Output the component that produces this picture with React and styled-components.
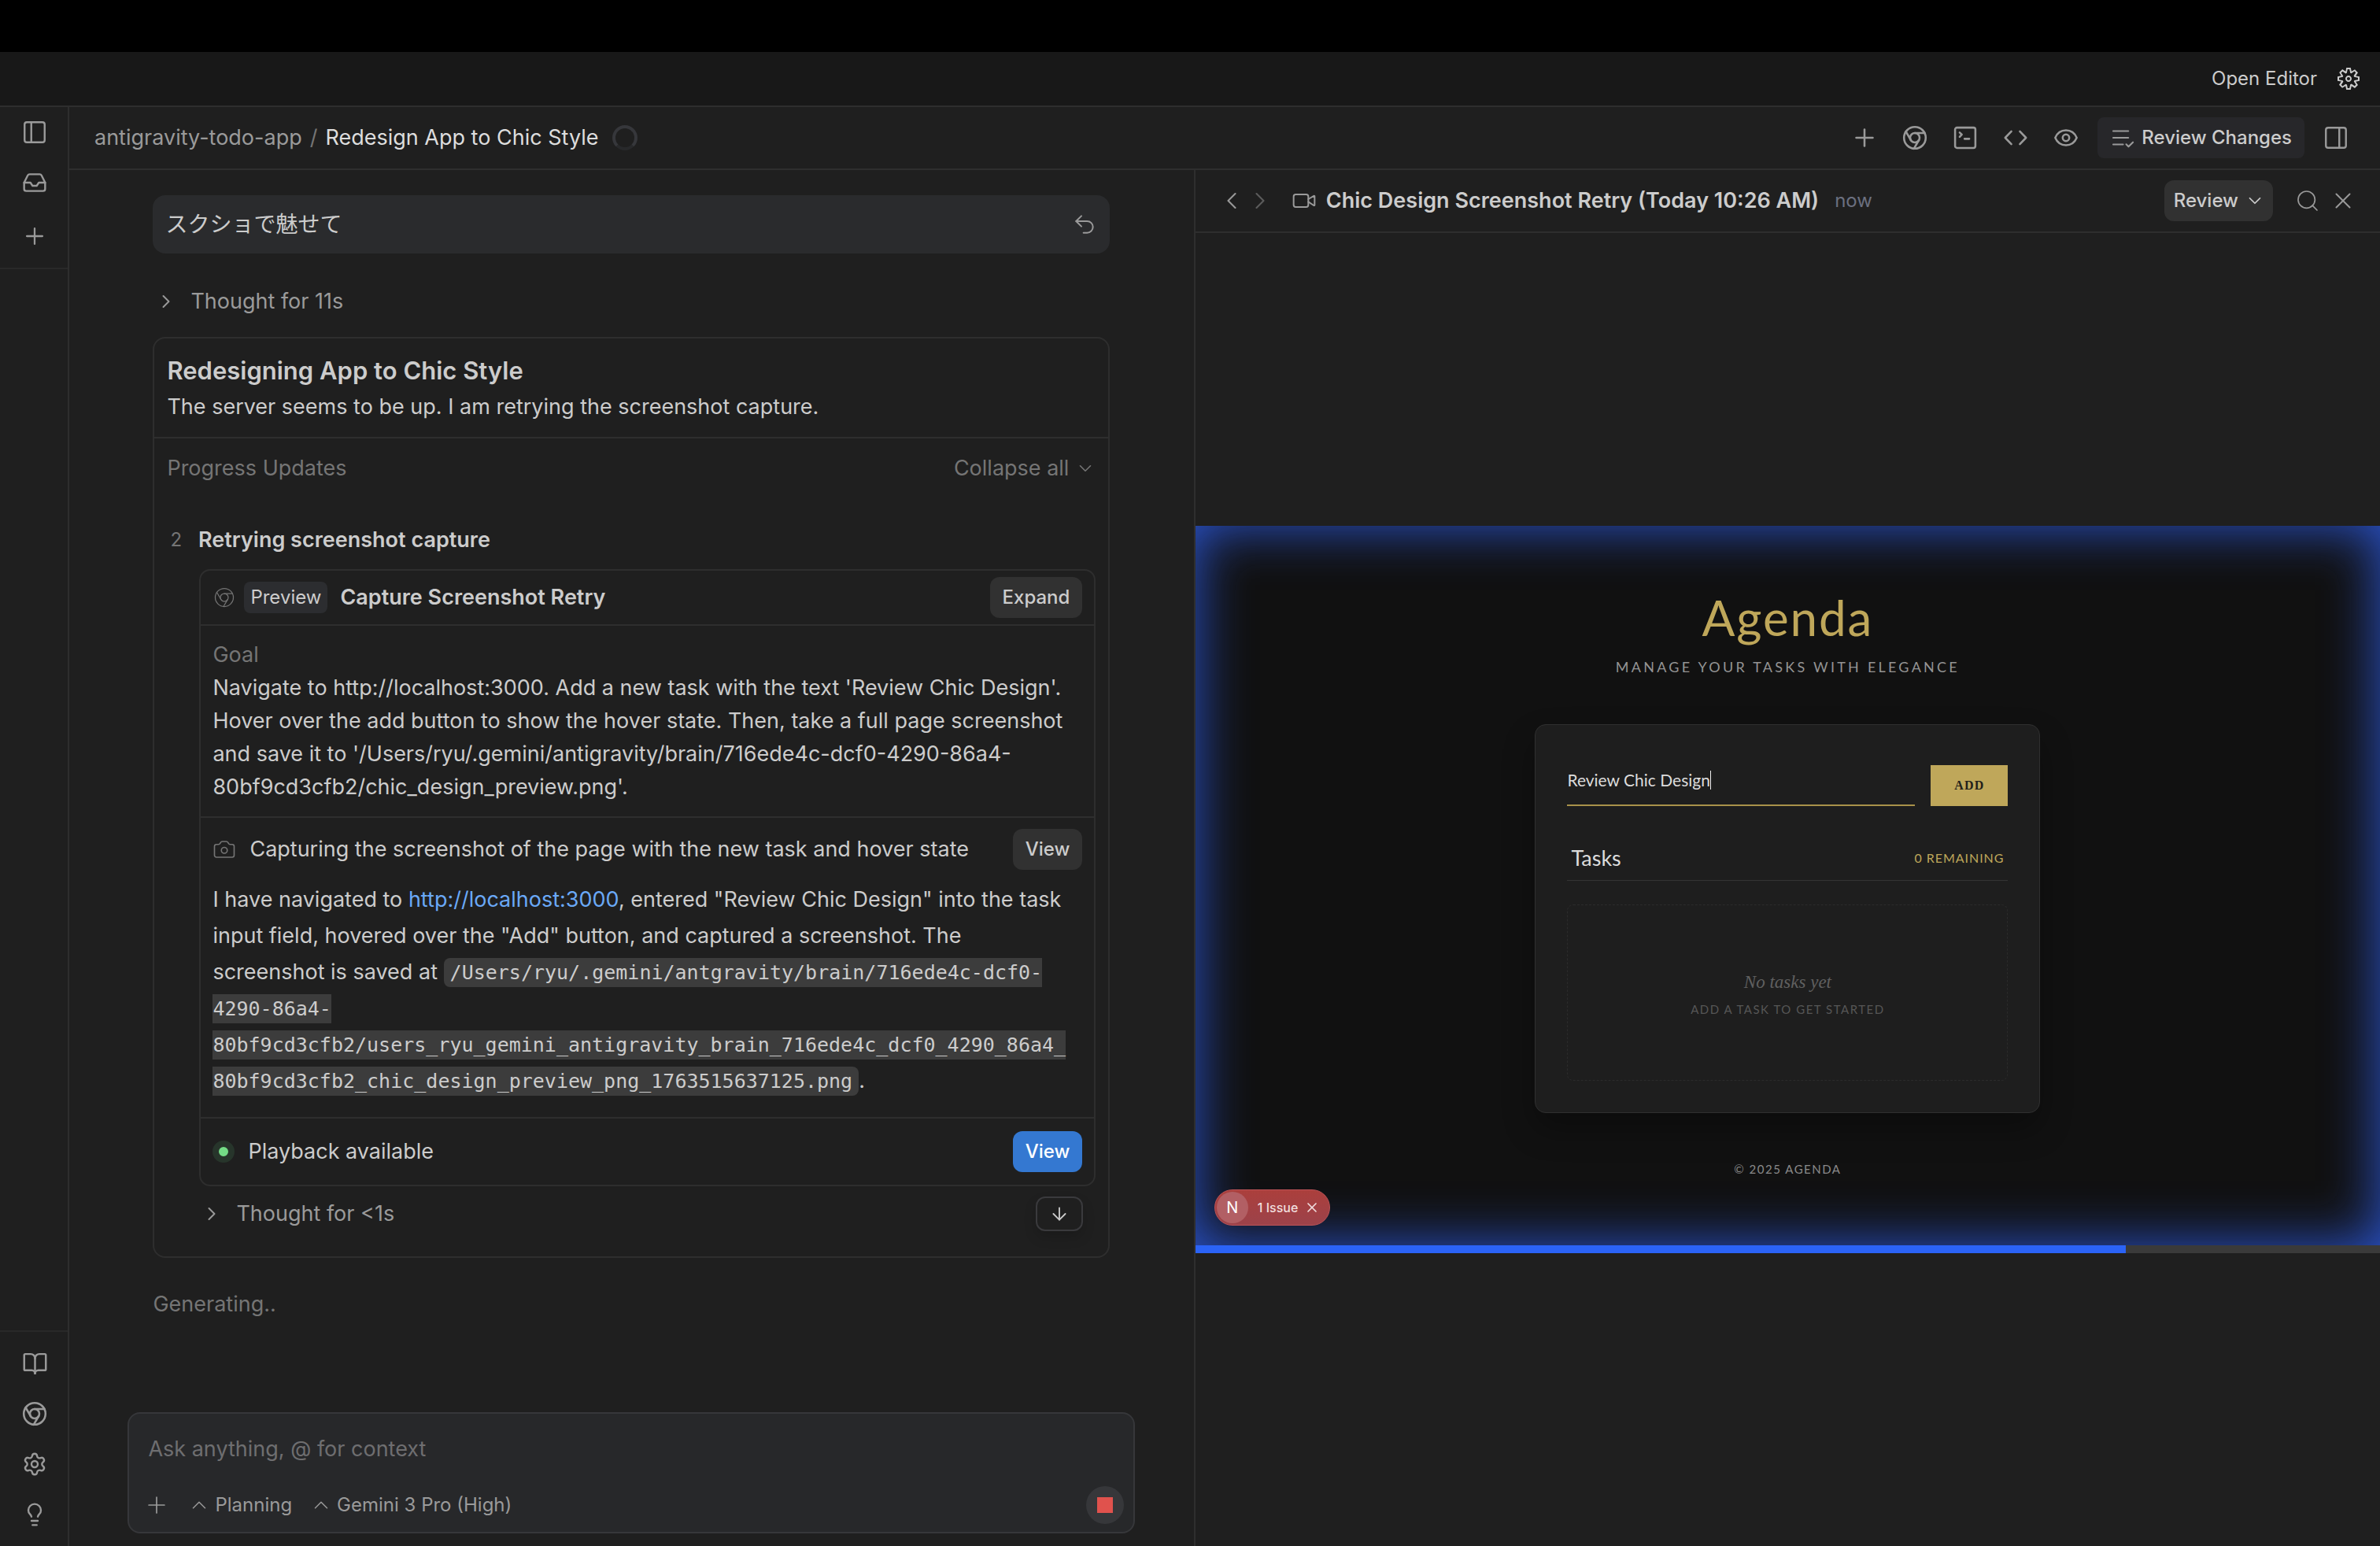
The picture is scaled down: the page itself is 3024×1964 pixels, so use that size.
import styled, { createGlobalStyle, css } from "styled-components";
import {
    ArrowDown,
    BookOpen,
    Camera,
    ChevronDown,
    ChevronLeft,
    ChevronRight,
    ChevronUp,
    Inbox,
    Lightbulb,
    PanelLeft,
    PanelRight,
    Plus,
    Search,
    Settings,
    Undo2,
    Video,
    X,
} from "lucide-react";
import { VscGear } from "react-icons/vsc";

const colors = {
    page: "#1f1f1f",
    bar: "#181818",
    border: "#2e2e2e",
    text: "#cccccc",
    muted: "#9a9a9a",
    dim: "#757575",
    button: "#313131",
    raised: "#27282a",
    blue: "#3478d1",
    link: "#6aa9f7",
    gold: "#bfa75a",
};

const Svg = ({ size = 36, stroke = 1.7, children }) => (
    <svg
        width={size}
        height={size}
        viewBox="0 0 24 24"
        fill="none"
        stroke="currentColor"
        strokeWidth={stroke}
        strokeLinecap="round"
        strokeLinejoin="round"
        aria-hidden="true"
    >
        {children}
    </svg>
);

const ChromeIcon = (props) => (
    <Svg {...props}>
        <circle cx="12" cy="12" r="9.2" />
        <circle cx="12" cy="12" r="4" />
        <path d="M12 8h8.3M8.6 14 4.4 6.8M15.4 14l-4.2 7.2" />
    </Svg>
);

const TerminalIcon = () => (
    <Svg>
        <rect x="3.4" y="3.4" width="17.2" height="17.2" rx="1.6" />
        <path d="M7.3 7.6l1.8 1.7-1.8 1.9M11.4 12.9h4" />
    </Svg>
);

const CodeIcon = () => (
    <Svg>
        <path d="M8.4 6.6 3.2 12l5.2 5.4M15.6 6.6l5.2 5.4-5.2 5.4" />
    </Svg>
);

const EyeIcon = () => (
    <Svg>
        <path d="M2.9 12C4.6 8 8 5.7 12 5.7S19.4 8 21.1 12c-1.7 4-5.1 6.3-9.1 6.3S4.6 16 2.9 12Z" />
        <circle cx="12" cy="12" r="2.8" />
    </Svg>
);

const ReviewIcon = () => (
    <Svg size={32} stroke={1.6}>
        <path d="M3 5.6h14.4M3 12h14.4M3 18.4h9.4M15.4 18.2l2.2 2.3 4.2-4.2" />
    </Svg>
);

const Sidebar = () => (
    <SideNav>
        <SideGroup>
            <SideButton aria-label="Toggle sidebar"><PanelLeft size={34} strokeWidth={1.7} /></SideButton>
            <SideButton aria-label="Inbox"><Inbox size={32} strokeWidth={1.8} /></SideButton>
            <SideButton $spaced aria-label="New"><Plus size={34} strokeWidth={1.6} /></SideButton>
        </SideGroup>
        <SideGroup $bottom>
            <SideButton aria-label="Knowledge"><BookOpen size={33} strokeWidth={1.8} /></SideButton>
            <SideButton aria-label="Browser"><ChromeIcon /></SideButton>
            <SideButton aria-label="Settings"><Settings size={32} strokeWidth={1.8} /></SideButton>
            <SideButton aria-label="Feedback"><Lightbulb size={32} strokeWidth={1.8} /></SideButton>
        </SideGroup>
    </SideNav>
);

const Toolbar = () => (
    <Header>
        <Crumbs>
            <Project href="#">antigravity-todo-app</Project>
            <Slash>/</Slash>
            <Current>Redesign App to Chic Style</Current>
            <Spinner />
        </Crumbs>
        <Tools>
            <ToolButton aria-label="Add"><Plus size={36} strokeWidth={1.7} /></ToolButton>
            <ToolButton aria-label="Browser"><ChromeIcon /></ToolButton>
            <ToolButton aria-label="Terminal"><TerminalIcon /></ToolButton>
            <ToolButton aria-label="Code"><CodeIcon /></ToolButton>
            <ToolButton aria-label="Preview"><EyeIcon /></ToolButton>
            <ReviewChanges><ReviewIcon /><span>Review Changes</span></ReviewChanges>
            <ToolButton aria-label="Toggle panel"><PanelRight size={34} strokeWidth={1.7} /></ToolButton>
        </Tools>
    </Header>
);

const BrowserTask = () => (
    <TaskCard>
        <TaskHead>
            <ChromeIcon size={30} stroke={1} />
            <Badge>Preview</Badge>
            <TaskTitle>Capture Screenshot Retry</TaskTitle>
            <Button>Expand</Button>
        </TaskHead>
        <Goal>
            <GoalLabel>Goal</GoalLabel>
            <p>
                Navigate to http://localhost:3000. Add a new task with the text 'Review Chic Design'.
                Hover over the add button to show the hover state. Then, take a full page screenshot
                and save it to '/Users/ryu/.gemini/antigravity/brain/716ede4c-dcf0-4290-86a4-80bf9cd3cfb2/chic_design_preview.png'.
            </p>
        </Goal>
        <StepRow>
            <Camera size={30} strokeWidth={1.3} />
            <StepText>Capturing the screenshot of the page with the new task and hover state</StepText>
            <Button>View</Button>
        </StepRow>
        <Result>
            I have navigated to <Link href="http://localhost:3000">http://localhost:3000</Link>, entered
            "Review Chic Design" into the task input field, hovered over the "Add" button, and captured a
            screenshot. The screenshot is saved at{" "}
            <Code>
                /Users/ryu/.gemini/antgravity/brain/716ede4c-dcf0-4290-86a4-80bf9cd3cfb2/users_ryu_gemini_antigravity_brain_716ede4c_dcf0_4290_86a4_
                <wbr />
                80bf9cd3cfb2_chic_design_preview_png_1763515637125.png
            </Code>.
        </Result>
        <Playback>
            <Dot />
            <StepText>Playback available</StepText>
            <Button $primary>View</Button>
        </Playback>
    </TaskCard>
);

const Chat = () => (
    <ChatPane>
        <Thread>
            <Prompt>
                <span>スクショで魅せて</span>
                <Bare aria-label="Undo"><Undo2 size={32} strokeWidth={1.5} /></Bare>
            </Prompt>
            <Thought><ChevronRight size={28} strokeWidth={1.7} />Thought for 11s</Thought>
            <Card>
                <CardHead>
                    <CardTitle>Redesigning App to Chic Style</CardTitle>
                    <p>The server seems to be up. I am retrying the screenshot capture.</p>
                </CardHead>
                <Progress>
                    <span>Progress Updates</span>
                    <Collapse>Collapse all<ChevronDown size={26} strokeWidth={1.5} /></Collapse>
                </Progress>
                <Step>
                    <StepNumber>2</StepNumber>
                    <StepName>Retrying screenshot capture</StepName>
                </Step>
                <BrowserTask />
                <CardFoot>
                    <Thought $nested><ChevronRight size={28} strokeWidth={1.7} />Thought for &lt;1s</Thought>
                    <ScrollDown aria-label="Scroll down"><ArrowDown size={26} strokeWidth={1.7} /></ScrollDown>
                </CardFoot>
            </Card>
            <Generating>Generating..</Generating>
        </Thread>
        <Composer>
            <Ask aria-label="Message" placeholder="Ask anything, @ for context" />
            <ComposerRow>
                <Bare aria-label="Attach"><Plus size={34} strokeWidth={1.2} /></Bare>
                <Mode><ChevronUp size={30} strokeWidth={1.2} />Planning</Mode>
                <Mode><ChevronUp size={30} strokeWidth={1.2} />Gemini 3 Pro (High)</Mode>
                <Stop aria-label="Stop"><StopSquare /></Stop>
            </ComposerRow>
        </Composer>
    </ChatPane>
);

const Recording = () => (
    <Screen>
        <AgendaTitle>Agenda</AgendaTitle>
        <Tagline>MANAGE YOUR TASKS WITH ELEGANCE</Tagline>
        <AgendaCard>
            <AddRow>
                <Field>
                    <FieldInput aria-label="New task" defaultValue="Review Chic Design" />
                    <Caret />
                </Field>
                <AddButton>ADD</AddButton>
            </AddRow>
            <TasksHead>
                <TasksTitle>Tasks</TasksTitle>
                <Remaining>0 REMAINING</Remaining>
            </TasksHead>
            <Empty>
                <EmptyTitle>No tasks yet</EmptyTitle>
                <EmptyHint>ADD A TASK TO GET STARTED</EmptyHint>
            </Empty>
        </AgendaCard>
        <Copyright>© 2025 AGENDA</Copyright>
        <Issue>
            <IssueLogo>N</IssueLogo>
            <span>1 Issue</span>
            <IssueClose aria-label="Dismiss"><X size={20} strokeWidth={2} /></IssueClose>
        </Issue>
    </Screen>
);

const Artifact = () => (
    <ArtifactPane>
        <ArtifactHead>
            <Bare aria-label="Back"><ChevronLeft size={36} strokeWidth={1.4} /></Bare>
            <Bare $faded aria-label="Forward"><ChevronRight size={36} strokeWidth={1.4} /></Bare>
            <VideoMark><Video size={32} strokeWidth={1.5} /></VideoMark>
            <ArtifactTitle>Chic Design Screenshot Retry (Today 10:26 AM)</ArtifactTitle>
            <When>now</When>
            <ReviewMenu>Review<ChevronDown size={26} strokeWidth={1.6} /></ReviewMenu>
            <Bare aria-label="Search"><Search size={32} strokeWidth={1.3} /></Bare>
            <Bare aria-label="Close"><X size={34} strokeWidth={1.4} /></Bare>
        </ArtifactHead>
        <Player>
            <Recording />
            <Track aria-label="Playback position" value="1182" max="1505" />
        </Player>
    </ArtifactPane>
);

const App = () => {
    return (
        <Window>
            <GlobalStyle />
            <Notch />
            <TitleBar>
                <OpenEditor>Open Editor</OpenEditor>
                <TitleGear aria-label="Settings"><VscGear size={32} /></TitleGear>
            </TitleBar>
            <Body>
                <Sidebar />
                <Workspace>
                    <Toolbar />
                    <Panes>
                        <Chat />
                        <Artifact />
                    </Panes>
                </Workspace>
            </Body>
        </Window>
    );
}

const GlobalStyle = createGlobalStyle`
    * {
        box-sizing: border-box;
    }

    body {
        margin: 0;
        background: ${colors.page};
        color: ${colors.text};
        font-family: Inter, "Noto Sans CJK JP", sans-serif;
        font-size: 27px;
        line-height: 42px;
    }

    p, h1, h2, h3 {
        margin: 0;
    }

    button {
        display: flex;
        align-items: center;
        justify-content: center;
        padding: 0;
        border: 0;
        background: none;
        color: inherit;
        font: inherit;
    }

    svg {
        flex: none;
    }
`;

const Window = styled.div`
    display: flex;
    flex-direction: column;
    min-height: 100vh;
`;

const Notch = styled.div`
    height: 66px;
    background: #000000;
`;

const TitleBar = styled.header`
    display: flex;
    align-items: center;
    justify-content: flex-end;
    gap: 24px;
    height: 70px;
    padding: 0 24px;
    background: ${colors.bar};
    border-bottom: 2px solid ${colors.border};
`;

const OpenEditor = styled.button`
    font-size: 24px;
`;

const TitleGear = styled.button``;

const Body = styled.div`
    display: flex;
    flex: 1;
`;

const SideNav = styled.nav`
    display: flex;
    flex: none;
    flex-direction: column;
    justify-content: space-between;
    width: 88px;
    border-right: 2px solid ${colors.border};
    color: ${colors.muted};
`;

const SideGroup = styled.div`
    display: flex;
    flex-direction: column;
    padding: ${({ $bottom }) => ($bottom ? "8px 0" : "0 0 8px")};
    ${({ $bottom }) => ($bottom ? "border-top" : "border-bottom")}: 2px solid #292929;
`;

const SideButton = styled.button`
    height: 64px;
    margin-top: ${({ $spaced }) => ($spaced ? "4px" : "0")};
    padding-left: 2px;
`;

const Workspace = styled.div`
    display: flex;
    flex: 1;
    flex-direction: column;
    min-width: 0;
`;

const Header = styled.header`
    display: flex;
    align-items: center;
    justify-content: space-between;
    height: 80px;
    padding: 0 30px 0 32px;
    border-bottom: 2px solid ${colors.border};
`;

const Crumbs = styled.div`
    display: flex;
    align-items: center;
    gap: 10px;
`;

const Project = styled.a`
    color: ${colors.muted};
    text-decoration: none;
`;

const Slash = styled.span`
    color: ${colors.dim};
`;

const Current = styled.span`
    color: #dddddd;
`;

const Spinner = styled.span`
    width: 32px;
    height: 32px;
    margin-left: 8px;
    border: 4px solid #36373b;
    border-bottom-color: #28292b;
    border-radius: 50%;
`;

const Tools = styled.div`
    display: flex;
    align-items: center;
    gap: 12px;
    color: ${colors.muted};
`;

const ToolButton = styled.button`
    width: 52px;
    height: 52px;
`;

const ReviewChanges = styled.button`
    gap: 8px;
    height: 52px;
    margin: 0 2px;
    padding: 0 16px;
    border-radius: 8px;
    background: #27272a;
    font-size: 24px;
    font-weight: 500;

    span {
        color: ${colors.text};
    }
`;

const Panes = styled.main`
    display: grid;
    flex: 1;
    grid-template-columns: minmax(0, 0.948fr) minmax(0, 1fr);
`;

const ChatPane = styled.section`
    display: flex;
    flex-direction: column;
    align-items: center;
    justify-content: space-between;
    padding: 32px 16px 16px;
`;

const Thread = styled.div`
    width: 100%;
    max-width: 1216px;
`;

const Prompt = styled.div`
    display: flex;
    align-items: center;
    justify-content: space-between;
    height: 74px;
    padding: 0 16px;
    border-radius: 16px;
    background: #2a2b2d;
    font-size: 28px;
`;

const Bare = styled.button`
    color: ${({ $faded }) => ($faded ? "#5c5c5c" : colors.muted)};
`;

const Thought = styled.button`
    gap: 17px;
    margin: ${({ $nested }) => ($nested ? "0" : "40px 0 24px 3px")};
    color: ${colors.muted};
`;

const Card = styled.article`
    padding-bottom: 32px;
    border: 2px solid ${colors.border};
    border-radius: 16px;
`;

const CardHead = styled.header`
    padding: 17px 16px 16px;
    border-bottom: 2px solid ${colors.border};

    p {
        line-height: 44px;
    }
`;

const CardTitle = styled.h2`
    font-size: 31px;
    font-weight: 600;
    line-height: 48px;
`;

const Progress = styled.div`
    display: flex;
    align-items: center;
    justify-content: space-between;
    height: 76px;
    padding: 0 16px;
    color: ${colors.dim};
`;

const Collapse = styled.button`
    gap: 8px;
`;

const Step = styled.div`
    display: flex;
    align-items: center;
    gap: 21px;
    height: 90px;
    padding: 16px 20px 0;
`;

const StepNumber = styled.span`
    color: ${colors.dim};
    font-size: 24px;
`;

const StepName = styled.h3`
    font-size: 27px;
    font-weight: 600;
`;

const TaskCard = styled.section`
    margin: 0 16px 0 57px;
    border: 2px solid ${colors.border};
    border-radius: 14px;
`;

const row = css`
    display: flex;
    align-items: center;
    color: ${colors.dim};
`;

const TaskHead = styled.header`
    ${row}
    gap: 10px;
    padding: 8px 15px;
    border-bottom: 2px solid ${colors.border};
`;

const Badge = styled.span`
    padding: 0 8px;
    border-radius: 8px;
    background: #2c2d30;
    color: ${colors.text};
    font-size: 24px;
    line-height: 40px;
`;

const TaskTitle = styled.h3`
    flex: 1;
    margin-left: 6px;
    color: ${colors.text};
    font-size: 27px;
    font-weight: 600;
`;

const Button = styled.button`
    height: 52px;
    padding: 0 16px;
    border-radius: 12px;
    background: ${({ $primary }) => ($primary ? colors.blue : colors.button)};
    color: ${({ $primary }) => ($primary ? "#ffffff" : colors.text)};
    font-size: 24px;
    font-weight: 500;
`;

const Goal = styled.div`
    padding: 16px 15px;
    border-bottom: 2px solid ${colors.border};
`;

const GoalLabel = styled.p`
    color: ${colors.dim};
`;

const StepRow = styled.div`
    ${row}
    gap: 17px;
    padding: 14px 15px;
`;

const StepText = styled.span`
    flex: 1;
    color: ${colors.text};
    white-space: nowrap;
`;

const Result = styled.p`
    padding: 1px 27px 23px 15px;
    border-bottom: 2px solid ${colors.border};
    line-height: 46px;
`;

const Link = styled.a`
    color: ${colors.link};
    text-decoration: none;
`;

const Code = styled.code`
    padding: 4px 8px;
    border-radius: 8px;
    background: #3c3c3c;
    font-family: "DejaVu Sans Mono", monospace;
    font-size: 25px;
    line-height: 30px;
`;

const Playback = styled.div`
    ${row}
    gap: 17px;
    padding: 16px 15px;
`;

const Dot = styled.span`
    width: 28px;
    height: 28px;
    border: 8px solid #27352b;
    border-radius: 50%;
    background: #74dc86;
`;

const CardFoot = styled.footer`
    display: flex;
    align-items: center;
    justify-content: space-between;
    padding: 13px 32px 0 59px;
`;

const ScrollDown = styled.button`
    width: 60px;
    height: 44px;
    border: 2px solid #3a3a3d;
    border-radius: 12px;
    box-shadow: 0 8px 16px rgba(0, 0, 0, 0.15);
`;

const Generating = styled.p`
    margin: 38px 0 32px;
    color: ${colors.dim};
`;

const Composer = styled.form`
    display: flex;
    flex-direction: column;
    justify-content: space-between;
    width: 100%;
    max-width: 1280px;
    height: 154px;
    padding: 24px 12px 10px 18px;
    border: 2px solid #36373a;
    border-radius: 16px;
    background: ${colors.raised};
`;

const Ask = styled.input`
    padding: 0 0 0 6px;
    border: 0;
    background: none;
    color: ${colors.text};
    font: inherit;

    &::placeholder {
        color: #6e6e70;
    }
`;

const ComposerRow = styled.div`
    display: flex;
    align-items: center;
    gap: 22px;
    color: ${colors.muted};
    font-size: 24px;
`;

const Mode = styled.button`
    gap: 5px;
`;

const Stop = styled.button`
    width: 48px;
    height: 48px;
    margin-left: auto;
    border-radius: 50%;
    background: #36373a;
`;

const StopSquare = styled.span`
    width: 20px;
    height: 20px;
    background: #e0524d;
`;

const ArtifactPane = styled.section`
    display: flex;
    flex-direction: column;
    border-left: 2px solid ${colors.border};
`;

const ArtifactHead = styled.header`
    display: flex;
    align-items: center;
    height: 80px;
    padding: 0 30px 0 28px;
    border-bottom: 2px solid ${colors.border};
`;

const VideoMark = styled.span`
    display: flex;
    margin: 0 12px 0 22px;
    color: ${colors.muted};
`;

const ArtifactTitle = styled.h1`
    font-size: 27px;
    font-weight: 600;
`;

const When = styled.span`
    flex: 1;
    margin-left: 20px;
    color: #6b7080;
    font-size: 24px;
`;

const ReviewMenu = styled.button`
    gap: 8px;
    height: 52px;
    margin-right: 28px;
    padding: 0 10px 0 12px;
    border-radius: 12px;
    background: ${colors.button};
    font-size: 24px;
    font-weight: 500;

    ~ button {
        margin-left: 12px;
    }

    + button {
        margin-left: 0;
    }
`;

const Player = styled.div`
    display: flex;
    flex: 1;
    flex-direction: column;
    justify-content: center;
`;

const Screen = styled.div`
    position: relative;
    display: flex;
    flex-direction: column;
    align-items: center;
    aspect-ratio: 1505 / 914;
    padding-top: 76px;
    background: #111111;
    box-shadow: inset 0 0 68px rgba(47, 94, 235, 0.9);
    font-family: Lato, sans-serif;
`;

const AgendaTitle = styled.h2`
    color: ${colors.gold};
    font-size: 62px;
    font-weight: 400;
    line-height: 80px;
    letter-spacing: 0.03em;
`;

const Tagline = styled.p`
    margin-top: 2px;
    color: #949494;
    font-size: 18px;
    letter-spacing: 0.18em;
`;

const AgendaCard = styled.div`
    width: 642px;
    margin-top: 52px;
    padding: 51px 40px 40px;
    border: 1px solid #303030;
    border-radius: 14px;
    background: #1e1e1e;
    box-shadow: 0 20px 40px rgba(0, 0, 0, 0.3);
`;

const AddRow = styled.div`
    display: flex;
    align-items: stretch;
    gap: 20px;
    height: 52px;
`;

const Field = styled.label`
    display: flex;
    flex: 1;
    align-items: center;
    padding-bottom: 12px;
    border-bottom: 2px solid #a8924a;
`;

const FieldInput = styled.input`
    field-sizing: content;
    padding: 0;
    border: 0;
    background: none;
    color: #dcdcdc;
    font-family: inherit;
    font-size: 21px;
`;

const Caret = styled.span`
    width: 1px;
    height: 24px;
    background: #eeeeee;
`;

const AddButton = styled.button`
    width: 98px;
    background: ${colors.gold};
    color: #22201a;
    font-family: "Liberation Serif", serif;
    font-size: 16px;
    font-weight: 700;
    letter-spacing: 0.08em;
`;

const TasksHead = styled.div`
    display: flex;
    align-items: center;
    justify-content: space-between;
    height: 56px;
    margin-top: 39px;
    padding: 0 5px;
    border-bottom: 1px solid #333333;
`;

const TasksTitle = styled.h3`
    color: #dcdcdc;
    font-size: 27px;
    font-weight: 400;
`;

const Remaining = styled.span`
    color: ${colors.gold};
    font-size: 16px;
    letter-spacing: 0.06em;
`;

const Empty = styled.div`
    display: flex;
    flex-direction: column;
    align-items: center;
    justify-content: center;
    height: 224px;
    margin-top: 30px;
    padding-top: 8px;
    border: 1px dashed #2b2b2b;
    border-radius: 8px;
`;

const EmptyTitle = styled.p`
    color: #606060;
    font-family: "Liberation Serif", serif;
    font-size: 23px;
    font-style: italic;
    line-height: 34px;
`;

const EmptyHint = styled.p`
    color: #565656;
    font-size: 15px;
    letter-spacing: 0.1em;
    line-height: 34px;
`;

const Copyright = styled.p`
    margin-top: 50px;
    color: #8a8a8a;
    font-size: 15px;
    letter-spacing: 0.1em;
`;

/* floats over the recorded page, as the dev overlay does */
const Issue = styled.div`
    position: absolute;
    bottom: 25px;
    left: 24px;
    display: flex;
    align-items: center;
    gap: 12px;
    height: 46px;
    padding: 0 12px 0 2px;
    border: 1px solid #bd5457;
    border-radius: 23px;
    background: linear-gradient(#ab3f3c, #9c424a);
    color: #f1dede;
    font-family: Inter, sans-serif;
    font-size: 16px;
    font-weight: 500;
`;

const IssueLogo = styled.span`
    display: flex;
    align-items: center;
    justify-content: center;
    width: 40px;
    height: 40px;
    border-radius: 50%;
    background: #b25f64;
    color: #ffffff;
    font-size: 20px;
    font-weight: 400;
`;

const IssueClose = styled.button`
    margin-left: -4px;
`;

const Track = styled.progress`
    display: block;
    width: 100%;
    height: 10px;
    border: 0;
    background: #3a3a3a;
    appearance: none;

    &::-webkit-progress-bar {
        background: #3a3a3a;
    }

    &::-webkit-progress-value {
        background: #2b63f6;
    }
`;

export default App;
